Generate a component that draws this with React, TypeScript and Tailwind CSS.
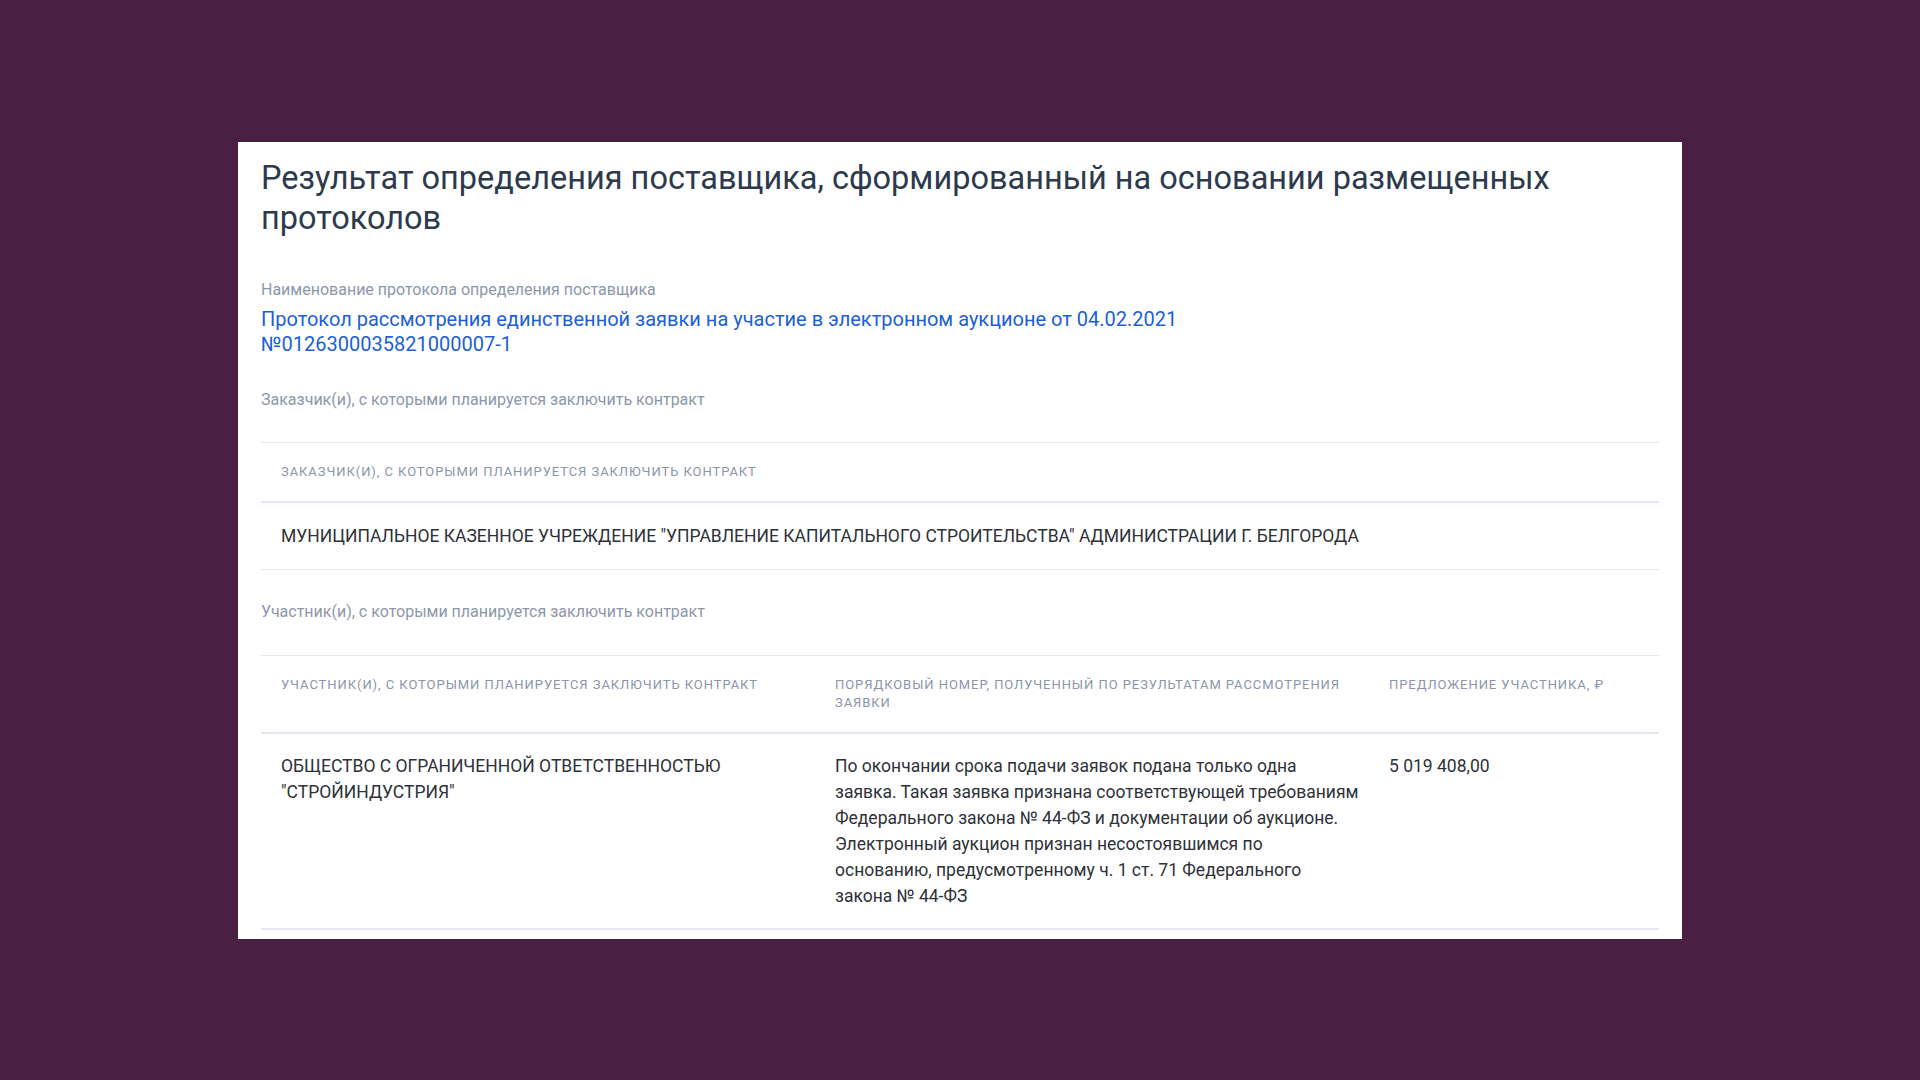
import React from 'react'

const th = 'pl-5 pr-2 pt-[20px] pb-[20px] text-[13px] leading-[18px] uppercase tracking-[0.072em] text-[#8a95ab] font-normal'
const td = 'pl-5 pr-2 py-[20px] text-[17.5px] leading-[26px] text-[#2e3138]'

const SectionLabel = ({ children }: { children: React.ReactNode }) => (
  <div className="text-[16px] leading-[22px] text-[#8d97ab]">{children}</div>
)

const App = () => {
  return (
    <div className="min-h-screen bg-[#4a1f44] flex items-center justify-center font-['Roboto',sans-serif]">
      <div className="w-[1444px] h-[797px] bg-white pl-[23px] pr-[23px] pt-4">
        <h1 className="text-[32.5px] leading-[40px] text-[#2d3a4d] font-normal">
          Результат определения поставщика, сформированный на основании размещенных протоколов
        </h1>

        <div className="mt-[41px]">
          <SectionLabel>Наименование протокола определения поставщика</SectionLabel>
          <div className="mt-[6px] text-[20px] leading-[25px] text-[#1c5fd6] w-[1000px]">
            Протокол рассмотрения единственной заявки на участие в электронном аукционе от 04.02.2021 №0126300035821000007-1
          </div>
        </div>

        <div className="mt-[32px]">
          <SectionLabel>Заказчик(и), с которыми планируется заключить контракт</SectionLabel>
          <div className="mt-[31px] border-t border-[#e6e8f1]">
            <div className={th + ' border-b-2 border-[#e4e7f1]'}>
              Заказчик(и), с которыми планируется заключить контракт
            </div>
            <div className={td + ' border-b border-[#e6e8f1]'}>
              МУНИЦИПАЛЬНОЕ КАЗЕННОЕ УЧРЕЖДЕНИЕ "УПРАВЛЕНИЕ КАПИТАЛЬНОГО СТРОИТЕЛЬСТВА" АДМИНИСТРАЦИИ Г. БЕЛГОРОДА
            </div>
          </div>
        </div>

        <div className="mt-[31px]">
          <SectionLabel>Участник(и), с которыми планируется заключить контракт</SectionLabel>
          <div className="mt-[32px] border-t border-[#e6e8f1]">
            <div className="grid grid-cols-[554px_554px_1fr] border-b-2 border-[#e4e7f1]">
              <div className={th}>Участник(и), с которыми планируется заключить контракт</div>
              <div className={th}>Порядковый номер, полученный по результатам рассмотрения заявки</div>
              <div className={th}>Предложение участника, ₽</div>
            </div>
            <div className="grid grid-cols-[554px_554px_1fr] border-b-2 border-[#e6e8f1]">
              <div className={td + ' pt-[19px] pb-[19px]'}>ОБЩЕСТВО С ОГРАНИЧЕННОЙ ОТВЕТСТВЕННОСТЬЮ "СТРОЙИНДУСТРИЯ"</div>
              <div className={td + ' pt-[19px] pb-[19px]'}>
                По окончании срока подачи заявок подана только одна заявка. Такая заявка признана соответствующей требованиям Федерального закона № 44-ФЗ и документации об аукционе. Электронный аукцион признан несостоявшимся по основанию, предусмотренному ч. 1 ст. 71 Федерального закона № 44-ФЗ
              </div>
              <div className={td + ' pt-[19px] pb-[19px]'}>5 019 408,00</div>
            </div>
          </div>
        </div>
      </div>
    </div>
  )
}

export default App
